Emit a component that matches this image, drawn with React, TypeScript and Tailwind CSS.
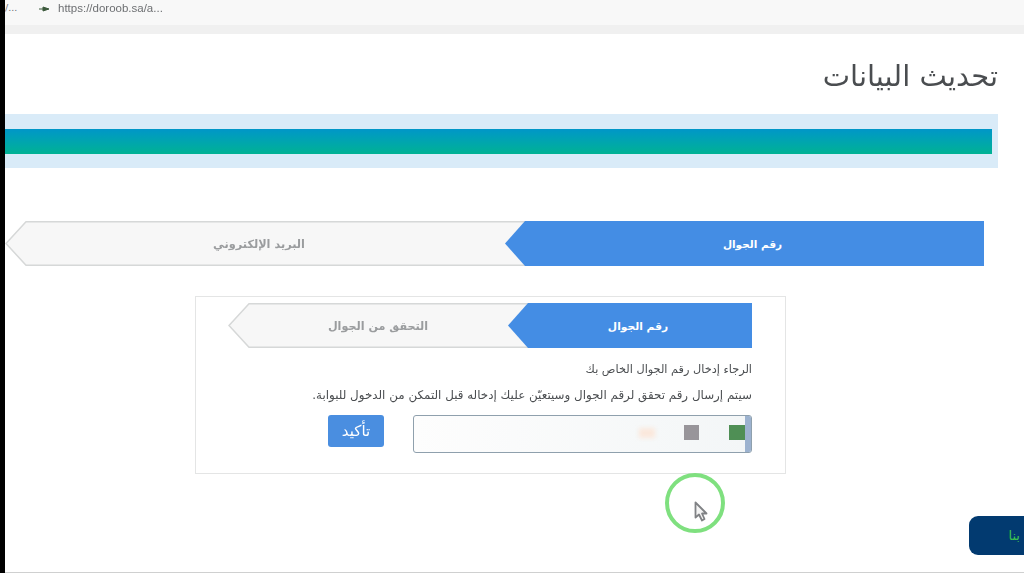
import React from "react";

const font = { fontFamily: '"DejaVu Sans", "Noto Sans", sans-serif' };

function GreyStep({ width, height }: { width: number; height: number }) {
  const t = 20;
  return (
    <svg className="absolute inset-0" width={width} height={height} viewBox={`0 0 ${width} ${height}`}>
      <path
        d={`M${width} 0.75 L${t + 1} 0.75 L1 ${height / 2} L${t + 1} ${height - 0.75} L${width} ${height - 0.75} Z`}
        fill="#f7f7f7"
        stroke="#d6d8d8"
        strokeWidth="1.5"
      />
    </svg>
  );
}

function Steps({
  total,
  blueWidth,
  blueLabel,
  greyLabel,
  greyShift,
  blueClass,
  greyClass,
}: {
  total: number;
  blueWidth: number;
  blueLabel: string;
  greyLabel: string;
  greyShift: number;
  blueClass: string;
  greyClass: string;
}) {
  const greyWidth = total - blueWidth + 20;
  return (
    <div className="flex h-[45px]" style={{ width: total }}>
      <div className="relative h-[45px] shrink-0" style={{ width: greyWidth }}>
        <GreyStep width={greyWidth} height={45} />
        <div
          dir="rtl"
          className={`relative flex h-full items-center justify-center pt-[3px] font-bold text-[#9a9c9e] ${greyClass}`}
          style={{ paddingRight: greyShift }}
        >
          {greyLabel}
        </div>
      </div>
      <div
        dir="rtl"
        className={`relative -ml-[20px] flex h-[45px] shrink-0 items-center justify-center bg-[#448de4] pl-[16px] pt-[3px] font-bold text-white [clip-path:polygon(20px_0,100%_0,100%_100%,20px_100%,0_50%)] ${blueClass}`}
        style={{ width: blueWidth }}
      >
        {blueLabel}
      </div>
    </div>
  );
}

export default function App() {
  return (
    <div className="relative flex h-[573px] w-[1024px] overflow-hidden bg-white" style={font}>
      <div className="w-[5px] shrink-0 bg-black" />
      <div className="flex min-w-0 flex-1 flex-col blur-[0.5px]">
        <div className="flex h-[25px] shrink-0 items-center bg-[#f8f8f8] pb-[8px] text-[9.5px] text-[#6d6f72]">
          <span className="w-[33px]">/...</span>
          <svg width="12" height="8" viewBox="0 0 12 8" className="mr-[8px]">
            <path d="M1 4h9M5 2l6 2-6 2z" fill="#3d5a3d" stroke="#3d5a3d" />
          </svg>
          <span style={{ fontFamily: '"Liberation Sans", sans-serif' }} className="text-[11.5px]">
            https://doroob.sa/a...
          </span>
        </div>
        <div className="h-[9px] shrink-0 bg-[#f0f0f0]" />

        <div dir="rtl" className="mt-[24px] h-[56px] shrink-0 pr-[26px] text-[29px] leading-[36px] text-[#4a4d50]">
          تحديث البيانات
        </div>

        <div className="flex h-[54px] w-[993px] shrink-0 items-center bg-[#d9ebf8] pr-[6px]">
          <div className="h-[25px] w-full bg-gradient-to-b from-[#0096c8] to-[#00b293]" />
        </div>

        <div className="mt-[53px] shrink-0">
          <Steps
            total={979}
            blueWidth={479}
            blueLabel="رقم الجوال"
            greyLabel="البريد الإلكتروني"
            greyShift={12}
            blueClass="text-[10.5px]"
            greyClass="text-[11.3px]"
          />
        </div>

        <div className="ml-[190px] mt-[30px] flex h-[178px] w-[591px] shrink-0 flex-col border border-[#e4e5e5] pl-[32px] pr-[33px] pt-[6px]">
          <Steps
            total={524}
            blueWidth={244}
            blueLabel="رقم الجوال"
            greyLabel="التحقق من الجوال"
            greyShift={0}
            blueClass="text-[10.7px]"
            greyClass="text-[11.2px]"
          />
          <div dir="rtl" className="mt-[15px] text-[11.3px] leading-[14px] text-[#4b4e51]">
            الرجاء إدخال رقم الجوال الخاص بك
          </div>
          <div dir="rtl" className="mt-[11px] text-[11.9px] leading-[14px] text-[#4b4e51]">
            سيتم إرسال رقم تحقق لرقم الجوال وسيتعيّن عليك إدخاله قبل التمكن من الدخول للبوابة.
          </div>
          <div className="ml-[100px] mt-[13px] flex items-start">
            <button
              dir="rtl"
              className="flex h-[32px] w-[56px] items-center justify-center rounded-[3px] bg-[#4a8ee0] text-[15px] text-white"
              style={font}
            >
              تأكيد
            </button>
            <div className="ml-[29px] flex h-[38px] w-[339px] items-center overflow-hidden rounded-[3px] border border-[#8fa0ad] bg-gradient-to-l from-[#f3f6f7] to-[#fdfdfd]">
              <div className="mb-[3px] ml-auto h-[10px] w-[16px] bg-[#fae8dc] blur-[2px]" />
              <div className="mb-[3px] ml-[29px] h-[15px] w-[15px] bg-[#98959a]" />
              <div className="mb-[3px] ml-[30px] h-[15px] w-[16px] bg-[#4f8f55]" />
              <div className="h-full w-[6px] bg-[#9cb2cf]" />
            </div>
          </div>
        </div>
      </div>

      <div className="absolute bottom-0 left-[5px] right-0 h-[1px] bg-[#cfd0d0]" />

      <div className="absolute left-[665px] top-[473px] h-[60px] w-[60px] rounded-full border-[4px] border-[#7fe07f] blur-[0.5px]" />
      <svg className="absolute left-[694px] top-[501px]" width="14" height="21" viewBox="0 0 14 21">
        <path d="M1.5 1.5V16.5L5 13.5L8 19.5L10.5 18L8 12.5H12.5Z" fill="#f4f4f4" stroke="#808285" strokeWidth="1.8" strokeLinejoin="round" />
      </svg>

      <div
        dir="rtl"
        className="absolute left-[969px] top-[516px] flex h-[39px] w-[55px] items-center rounded-l-[9px] bg-[#023a70] pr-[4px] text-[13px] text-[#3cc24f]"
      >
        بنا
      </div>
    </div>
  );
}
